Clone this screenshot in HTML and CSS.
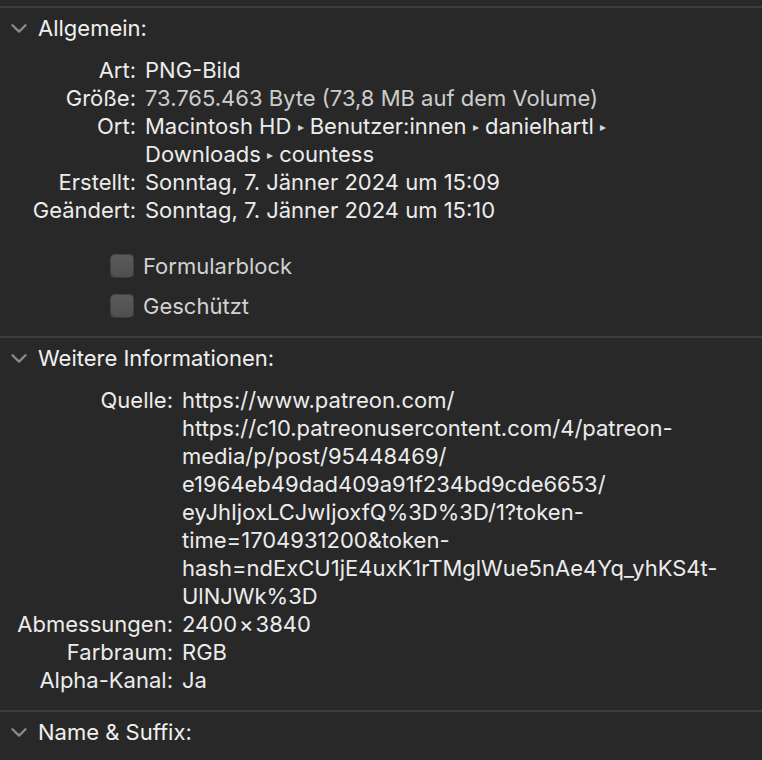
FILE: index.html
```html
<!DOCTYPE html>
<html lang="de">
<head>
<meta charset="utf-8">
<title>Informationen</title>
<link rel="stylesheet" href="styles.css">
</head>
<body>
<div class="pane">
  <section class="sec">
    <div class="head">
      <svg class="chev" viewBox="0 0 16 9" width="16" height="9"><path d="M1.5 1.2 L8 7.6 L14.5 1.2"/></svg>
      <span>Allgemein:</span>
    </div>
    <dl class="grid g1">
      <dt>Art:</dt><dd>PNG-Bild</dd>
      <dt>Größe:</dt><dd class="dim">73.765.463 Byte (73,8 MB auf dem Volume)</dd>
      <dt>Ort:</dt><dd>Macintosh HD <span class="tri">▸</span> Benutzer:innen <span class="tri">▸</span> danielhartl <span class="tri">▸</span><br>Downloads <span class="tri">▸</span> countess</dd>
      <dt>Erstellt:</dt><dd>Sonntag, 7. Jänner 2024 um 15:09</dd>
      <dt>Geändert:</dt><dd>Sonntag, 7. Jänner 2024 um 15:10</dd>
    </dl>
    <div class="checks">
      <label class="check"><span class="box"></span><span>Formularblock</span></label>
      <label class="check"><span class="box"></span><span>Geschützt</span></label>
    </div>
  </section>
  <section class="sec">
    <div class="head">
      <svg class="chev" viewBox="0 0 16 9" width="16" height="9"><path d="M1.5 1.2 L8 7.6 L14.5 1.2"/></svg>
      <span>Weitere Informationen:</span>
    </div>
    <dl class="grid g2">
      <dt>Quelle:</dt><dd>https://www.patreon.com/<br>https://c10.patreonusercontent.com/4/patreon-<br>media/p/post/95448469/<br>e1964eb49dad409a91f234bd9cde6653/<br>eyJhIjoxLCJwIjoxfQ%3D%3D/1?token-<br>time=1704931200&amp;token-<br>hash=ndExCU1jE4uxK1rTMglWue5nAe4Yq_yhKS4t-<br>UlNJWk%3D</dd>
      <dt>Abmessungen:</dt><dd>2400<span class="times">×</span>3840</dd>
      <dt>Farbraum:</dt><dd>RGB</dd>
      <dt>Alpha-Kanal:</dt><dd>Ja</dd>
    </dl>
  </section>
  <section class="sec">
    <div class="head">
      <svg class="chev" viewBox="0 0 16 9" width="16" height="9"><path d="M1.5 1.2 L8 7.6 L14.5 1.2"/></svg>
      <span>Name &amp; Suffix:</span>
    </div>
  </section>
</div>
</body>
</html>
```

FILE: styles.css
```css
* { box-sizing: border-box; }
html, body { margin: 0; padding: 0; }
body {
  background: #282828;
  color: #ececec;
  font-family: Inter, "Liberation Sans", sans-serif;
  font-size: 22px;
  height: 760px;
  overflow: hidden;
}
.pane { padding-top: 6px; }
.sec {
  border-top: 2px solid #3d3d3d;
  padding-bottom: 16px;
}
.head {
  display: flex;
  align-items: center;
  height: 28px;
  margin-top: 6px;
  padding-left: 11px;
  gap: 11px;
  color: #f0f0f0;
}
.chev path {
  fill: none;
  stroke: #8a8a8a;
  stroke-width: 2.3;
  stroke-linecap: round;
  stroke-linejoin: round;
}
.grid {
  display: grid;
  column-gap: 9px;
  margin: 14px 0 0;
  line-height: 28px;
}
.g1 { grid-template-columns: 136px 1fr; }
.g2 { grid-template-columns: 173px 1fr; }
.grid dt { text-align: right; margin: 0; color: #ececec; white-space: nowrap; }
.grid dd { margin: 0; color: #ececec; white-space: nowrap; }
.grid dd.dim { color: #cdcdcd; }
.tri { font-size: 12px; line-height: 0; color: #d8d8d8; vertical-align: 3px; }
.times { margin: 0 2px; }
.checks {
  display: flex;
  flex-direction: column;
  gap: 12px;
  margin-top: 28px;
  padding-left: 110px;
}
.check {
  display: flex;
  align-items: center;
  gap: 9px;
  height: 28px;
  color: #d2d2d2;
}
.box {
  width: 24px;
  height: 24px;
  border-radius: 5px;
  background: linear-gradient(#5c5c5c, #4e4e4e);
  box-shadow: inset 0 0 0 1px rgba(0,0,0,0.25);
}
```
